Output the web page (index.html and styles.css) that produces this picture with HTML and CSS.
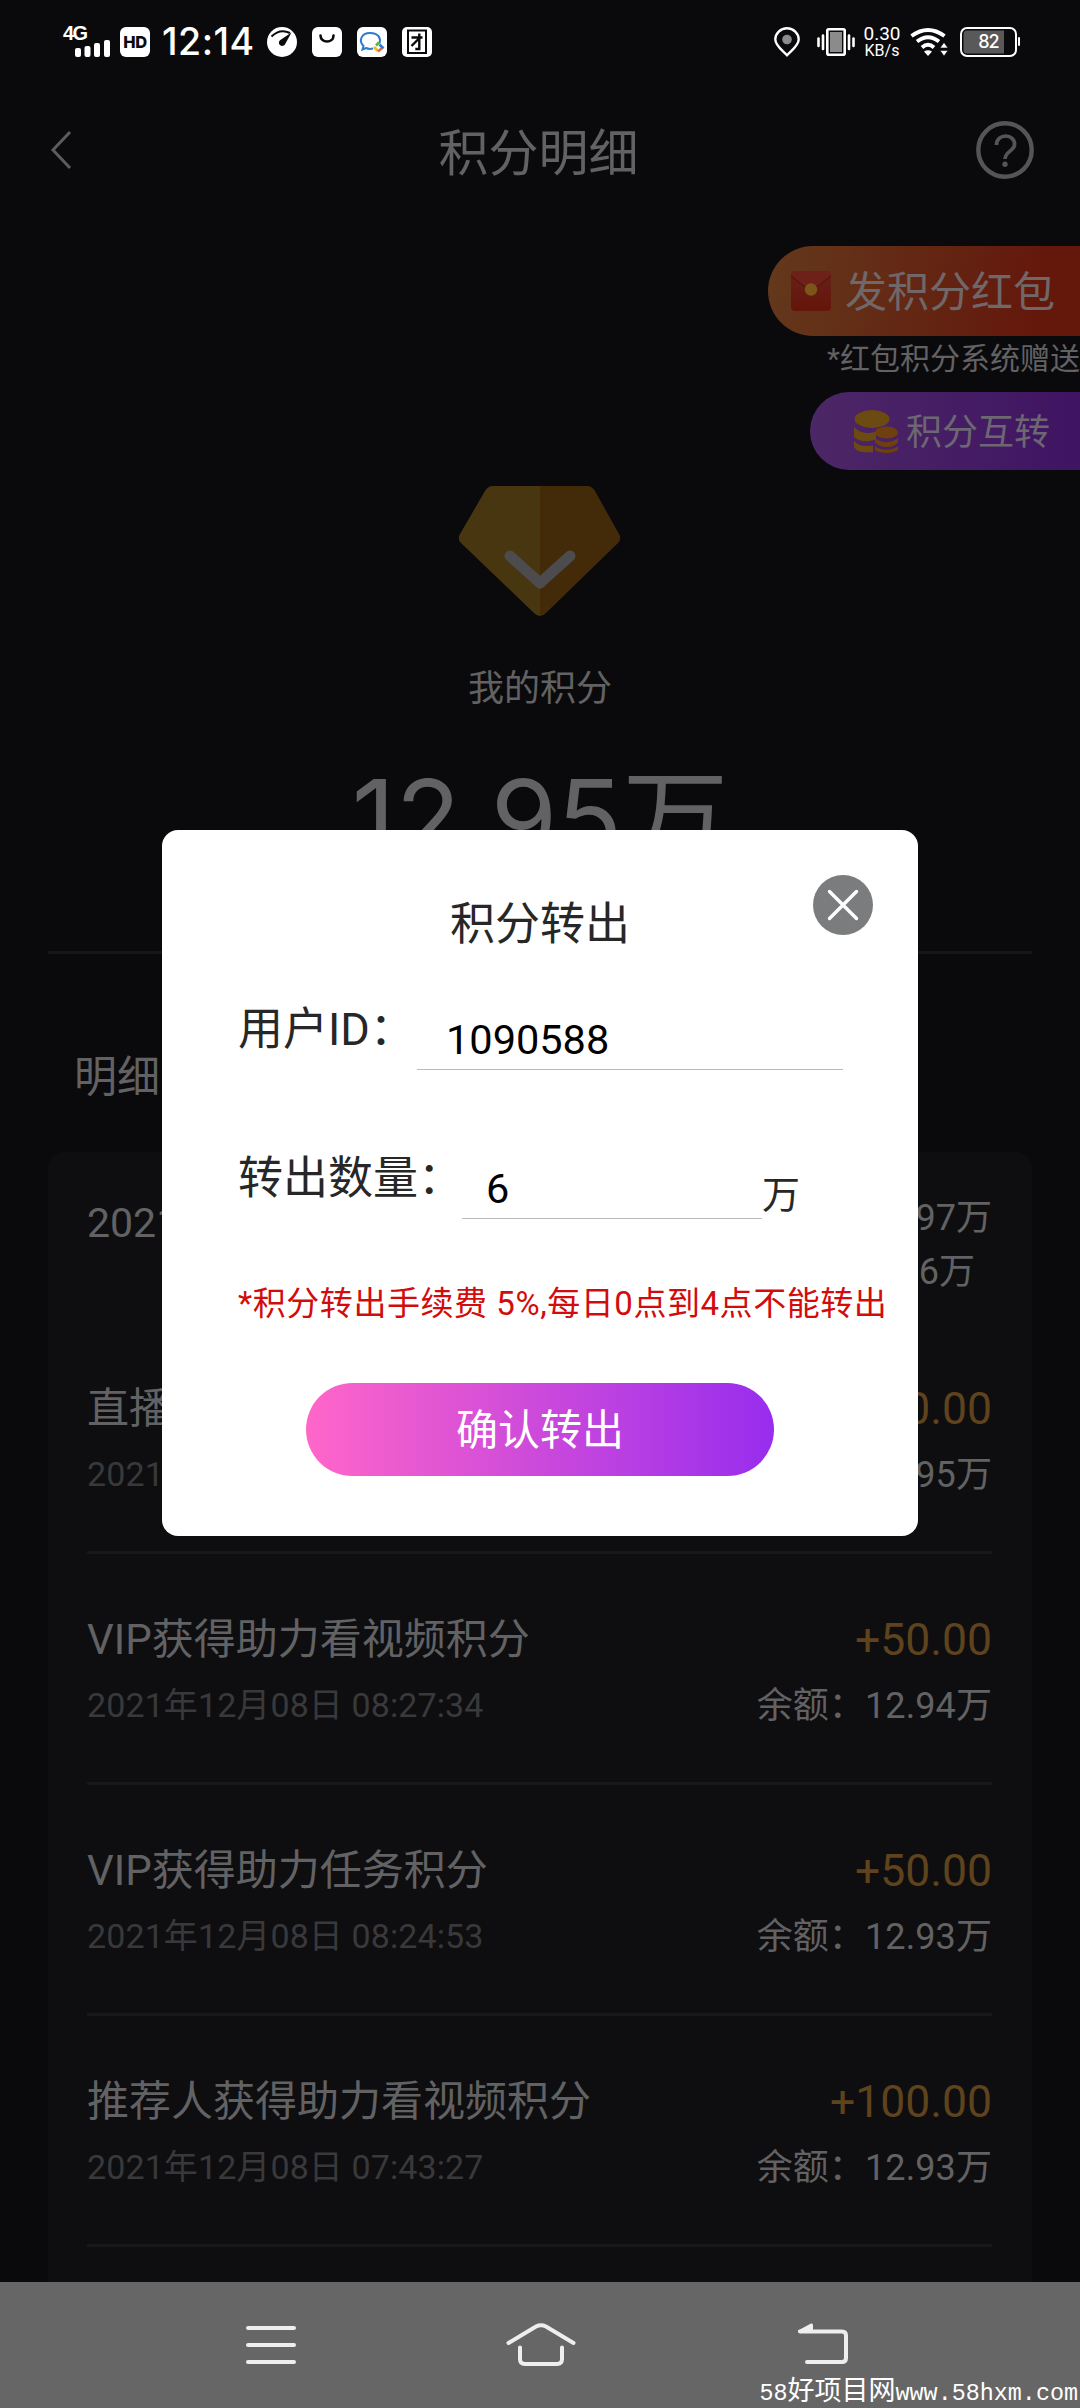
FILE: index.html
```html
<!DOCTYPE html>
<html lang="zh-CN">
<head>
<meta charset="utf-8">
<title>积分明细</title>
<link rel="stylesheet" href="styles.css">
</head>
<body>
<div class="phone">
  <header class="status">
    <div class="signal">
      <span class="net">4G</span>
      <svg class="bars" width="36" height="17" viewBox="0 0 36 17"><rect x="0" y="8" width="6" height="9" rx="2"/><rect x="9.500" y="6" width="6" height="11" rx="2"/><rect x="19" y="3" width="6" height="14" rx="2"/><rect x="29" y="0" width="6" height="17" rx="2"/></svg>
    </div>
    <span class="hd">HD</span>
    <span class="clock">12:14</span>
    <div class="apps">
      <svg width="30" height="30" viewBox="0 0 30 30"><circle cx="15" cy="15" r="15" fill="#fff"/><path d="M4.500 9.500Q13 1 23 6" fill="none" stroke="#0a0a0c" stroke-width="2"/><path d="M24.500 5.500L18.200 17a3.300 3.300 0 1 1-5.200-3.800z" fill="#0a0a0c"/></svg>
      <svg width="30" height="30" viewBox="0 0 30 30"><rect width="30" height="30" rx="6" fill="#fff"/><path d="M8.500 8.500c0 8 13 8 13 0" fill="none" stroke="#0a0a0c" stroke-width="2.600" stroke-linecap="round"/></svg>
      <svg width="30" height="30" viewBox="0 0 30 30"><rect width="30" height="30" rx="6" fill="#fff"/><path d="M16 21.500q-4 1-7-.500l-3.500 1.500 1-3.500C1.500 14 4 6 13 6s11 5.500 9.500 10.500" fill="none" stroke="#2a7ccc" stroke-width="2"/><path d="M19 18.500l3-3" stroke="#57b447" stroke-width="2.600"/><path d="M22.500 17.500l4 4" stroke="#2a7ccc" stroke-width="2.600"/><path d="M17 20l4 4" stroke="#edb62e" stroke-width="2.600"/><path d="M21 24.500l4-3.500" stroke="#e06a3c" stroke-width="2.600"/></svg>
      <svg width="30" height="30" viewBox="0 0 30 30"><rect width="30" height="30" rx="5" fill="#fff"/><rect x="6" y="3.500" width="18" height="22.500" fill="none" stroke="#0a0a0c" stroke-width="2"/><path d="M9.500 10.500h11M17.300 6.500v15.500h-4M17 11.500L9.500 19" fill="none" stroke="#0a0a0c" stroke-width="2.400"/></svg>
    </div>
    <div class="status-right">
      <svg class="pin" width="26" height="30" viewBox="0 0 26 30"><path d="M13 28.300C8 23 1.300 18.500 1.300 12.500a11.700 11.200 0 0 1 23.400 0c0 6-6.700 10.500-11.700 15.800z" fill="none" stroke="#fff" stroke-width="2.400"/><circle cx="13" cy="12.500" r="4.800" fill="#8b8b8c"/></svg>
      <svg class="vibrate" width="38" height="28" viewBox="0 0 38 28"><rect x="10.300" y="1.300" width="17.400" height="25.400" rx="1.500" fill="none" stroke="#fff" stroke-width="2.600"/><rect x="13" y="4" width="12" height="20" fill="#8b8b8c"/><path d="M1.500 10.500v7.500M6 7.500v13.500M32 7.500v13.500M36.500 10.500v7.500" stroke="#fff" stroke-width="2.600" stroke-linecap="round"/></svg>
      <div class="speed"><span>0.30</span><span class="unit">KB/s</span></div>
      <svg class="wifi" width="38" height="28" viewBox="0 0 38 28"><path d="M1.500 8Q18 -4 34.500 8M7 13.500Q18 5 29 13.500M12 19.500Q18 14 24 19.500" fill="none" stroke="#fff" stroke-width="3.800"/><path d="M14 23.500q4-2.500 8 0l-4 4.500z" fill="#fff"/><path d="M34 14.500l4 5.500h-8zM34 28l4-5.500h-8z" fill="#fff" stroke="#0a0a0c" stroke-width=".6"/></svg>
      <div class="battery"><span>82</span></div>
    </div>
  </header>

  <nav class="title-bar">
    <svg class="back" width="22" height="40" viewBox="0 0 22 40"><path d="M20 2L3 20l17 18" fill="none" stroke="#5c5c5e" stroke-width="3"/></svg>
    <h1>积分明细</h1>
    <svg class="help" width="58" height="58" viewBox="0 0 58 58"><circle cx="29" cy="29" r="26.700" fill="none" stroke="#555557" stroke-width="4.400"/><path d="M20.500 24c0-12.500 19-11.500 18 0-.500 6-9 6-9.500 14" fill="none" stroke="#555557" stroke-width="3.700"/><circle cx="29" cy="43.300" r="2.700" fill="#555557"/></svg>
  </nav>

  <section class="actions">
    <button class="pill pill-red">
      <svg width="42" height="42" viewBox="0 0 42 42"><defs><linearGradient id="env" x1="0" y1="0" x2="0" y2="1"><stop offset="0" stop-color="#65211a"/><stop offset="1" stop-color="#651509"/></linearGradient></defs><rect x="1" y="1" width="40" height="40" rx="4" fill="url(#env)"/><path d="M1 5Q1 1 5 1h32q4 0 4 4L28 15.500q-7 5-14 0z" fill="#6e2118"/><path d="M1 6l13 10q7 5 14 0L41 6" fill="none" stroke="#511208"/><circle cx="21" cy="19.500" r="6.200" fill="#7c5618"/></svg>
      <span>发积分红包</span>
    </button>
    <p class="gift-note">*红包积分系统赠送</p>
    <button class="pill pill-purple">
      <svg width="44" height="43" viewBox="0 0 44 43"><g fill="#6b4b12"><ellipse cx="18" cy="9" rx="17.500" ry="9"/><path d="M0 17c7 7 15 7 22 4.500v8C12 33 4 31 0 27zM0 31c6 6 11 5.500 19 4.500v6.500C9 43 3 42 0 37z"/><g fill="#6f400d"><ellipse cx="32.500" cy="22.500" rx="11.500" ry="6"/><path d="M21 28c6 5.500 17 5.500 23 0v4.500c-5 6-17 6-23 0zM21 36c6 5 17 5 23 0v4c-5 4-18 4-23 0z"/></g></g></svg>
      <span>积分互转</span>
    </button>
  </section>

  <section class="summary">
    <svg width="162" height="131" viewBox="0 0 162 131"><defs><clipPath id="gem"><path d="M34 0h94q5 0 8 5l24 43q3 5-1 9L87 127q-6 6-12 0L2 57q-4-4-1-9L26 5q3-5 8-5z"/></clipPath></defs><g clip-path="url(#gem)"><path d="M0 0h81v131H0z" fill="#473610"/><path d="M81 0h81v131H81z" fill="#432a09"/></g><path d="M51 70l30 27 30-27" fill="none" stroke="#4c4b4d" stroke-width="11" stroke-linecap="round" stroke-linejoin="round"/></svg>
    <h2>我的积分</h2>
    <p class="total"><span>12.95</span>万</p>
  </section>

  <h3 class="section-title">明细</h3>

  <main class="card">
    <div class="month">
      <span>2021</span>
      <div class="month-sums"><span>97万</span><span class="spent">6万</span></div>
    </div>
    <div class="row">
      <div class="row-left"><b>直播</b><time>2021</time></div>
      <div class="row-right"><b>0.00</b><span>95万</span></div>
    </div>
    <div class="row">
      <div class="row-left"><b>VIP获得助力看视频积分</b><time>2021年12月08日 08:27:34</time></div>
      <div class="row-right"><b>+50.00</b><span>余额：12.94万</span></div>
    </div>
    <div class="row">
      <div class="row-left"><b>VIP获得助力任务积分</b><time>2021年12月08日 08:24:53</time></div>
      <div class="row-right"><b>+50.00</b><span>余额：12.93万</span></div>
    </div>
    <div class="row">
      <div class="row-left"><b>推荐人获得助力看视频积分</b><time>2021年12月08日 07:43:27</time></div>
      <div class="row-right"><b>+100.00</b><span>余额：12.93万</span></div>
    </div>
  </main>

  <footer class="system-nav">
    <svg width="50" height="44" viewBox="0 0 50 44"><path d="M2 5h46M2 22h46M2 39h46" stroke="#eee" stroke-width="4" stroke-linecap="round"/></svg>
    <svg width="70" height="44" viewBox="0 0 70 44"><path d="M2.500 20L30 3.500q5-2.500 10 0L67.500 20M14 24.500V36q0 5 5 5h32q5 0 5-5V24.500" fill="none" stroke="#eee" stroke-width="4" stroke-linecap="round"/></svg>
    <svg width="52" height="44" viewBox="0 0 52 44"><path d="M3 8.500h42q4 0 4 4V35q0 4-4 4H10" fill="none" stroke="#eee" stroke-width="4" stroke-linecap="round"/><path d="M1 7.500L14 .5q2-.5 2 1.500v7H2z" fill="#eee"/></svg>
  </footer>
  <div class="watermark">58<span>好项目网</span>www.58hxm.com</div>

  <div class="dialog">
    <svg class="close" width="60" height="60" viewBox="0 0 60 60"><circle cx="30" cy="30" r="30" fill="#7b7c7d"/><path d="M16.500 16.500l27 27M43.500 16.500l-27 27" stroke="#fff" stroke-width="3.400" stroke-linecap="round"/></svg>
    <h2>积分转出</h2>
    <div class="field field-id"><label>用户ID：</label><div class="input">1090588</div></div>
    <div class="field field-amount"><label>转出数量：</label><div class="input">6</div><span class="unit">万</span></div>
    <p class="fee">*积分转出手续费 5%,每日0点到4点不能转出</p>
    <button class="confirm">确认转出</button>
  </div>
</div>
</body>
</html>
```
FILE: styles.css
```css
* { box-sizing: border-box; margin: 0; padding: 0; }
body { background: #0a0a0c; font-family: Roboto, "Noto Sans CJK SC", sans-serif; color: #626264; }
h1, h2, h3, b { font-weight: 400; }
button { border: 0; font-family: inherit; }
svg { display: block; flex: none; overflow: visible; }
.phone { position: relative; width: 1080px; height: 2408px; display: flex; flex-direction: column; overflow: hidden; white-space: nowrap; }

/* status bar */
.status { height: 84px; flex: none; display: flex; align-items: center; padding-left: 63px; padding-right: 63px; color: #fff; font-family: Inter, sans-serif; }
.signal { width: 57px; height: 34px; display: flex; flex-direction: column; }
.net { font: 700 20px/17px "Liberation Sans", sans-serif; letter-spacing: -1.500px; height: 15px; }
.bars { margin-left: 12px; fill: #fff; }
.hd { width: 30px; height: 30px; border-radius: 6px; background: #fff; color: #0a0a0c; font: 800 16.500px/30px Inter, sans-serif; letter-spacing: -.5px; text-align: center; }
.clock { width: 117px; padding-left: 12px; font-size: 37.500px; line-height: 40px; font-weight: 500; letter-spacing: .5px; }
.apps { display: flex; gap: 15px; }
.status-right { margin-left: auto; display: flex; align-items: center; }
.pin { margin-right: 2px; }
.vibrate { margin-left: 15px; }
.speed { width: 40px; margin-left: 7px; display: flex; flex-direction: column; align-items: center; font: 400 19px/17px Roboto, sans-serif; }
.speed .unit { font-size: 16px; }
.wifi { margin-left: 8px; }
.battery { position: relative; margin-left: 12px; width: 57px; height: 30px; border: 2.500px solid #fff; border-radius: 7px; background: linear-gradient(90deg, #59595a 79%, #0a0a0c 79%); box-shadow: inset 0 0 0 1.500px #0a0a0c; font-size: 18px; font-weight: 500; line-height: 26px; text-align: center; letter-spacing: -1px; }
.battery::after { content: ""; position: absolute; right: -5px; top: 8px; width: 2px; height: 9px; border-radius: 1px; background: #fff; }

/* page title */
.title-bar { height: 132px; flex: none; display: flex; align-items: center; justify-content: space-between; padding: 0 46px 0 50px; }
.title-bar h1 { font-size: 50px; line-height: 72px; margin: 7px 0 0 29px; }

/* floating actions */
.actions { margin-top: 30px; display: flex; flex-direction: column; align-items: flex-end; }
.pill { display: flex; align-items: center; color: #626264; }
.pill span { margin-top: -5px; }
.pill-red { width: 312px; height: 90px; border-radius: 45px 0 0 45px; padding-left: 22px; gap: 13px; background: linear-gradient(100deg, #63391c, #64180c 85%); font-size: 42px; color: #706769; }
.gift-note { height: 56px; line-height: 45px; font-size: 30px; }
.pill-purple { width: 270px; height: 78px; border-radius: 39px 0 0 39px; padding-left: 44px; gap: 8px; background: linear-gradient(90deg, #4c2766, #3f1463); font-size: 36px; color: #6d6772; }

/* balance */
.summary { height: 484px; margin: 0 48px; padding-top: 16px; display: flex; flex-direction: column; align-items: center; border-bottom: 3px solid #161618; }
.summary h2 { margin-top: 46px; font-size: 36px; line-height: 52px; }
.total { margin-top: 33px; font-size: 106px; line-height: 140px; }
.total span { font-family: Inter, sans-serif; font-size: 107px; }

/* records */
.section-title { margin: 93px 0 0 74px; height: 105px; font-size: 43px; line-height: 60px; }
.card { margin: 0 48px; padding: 0 40px 0 39px; height: 1130px; flex: none; background: #0e0e10; border-radius: 16px 16px 0 0; overflow: hidden; }
.month { height: 171px; display: flex; justify-content: space-between; font-size: 41px; line-height: 56px; padding-top: 43px; }
.month-sums { display: flex; flex-direction: column; align-items: flex-end; font-size: 36px; line-height: 54px; margin-top: -4px; }
.spent { margin-right: 17px; }
.row { height: 231px; padding: 56px 0 0; border-bottom: 3px solid #18181a; display: flex; justify-content: space-between; }
.row-left, .row-right { display: flex; flex-direction: column; gap: 12px; }
.row-right { align-items: flex-end; gap: 13px; }
.row b { font-size: 42px; line-height: 60px; }
.row time { font-size: 34px; line-height: 46px; color: #39393b; letter-spacing: .1px; }
.row-right b { font-size: 44.500px; color: #5e431d; }
.row-right span { font-size: 36px; line-height: 46px; letter-spacing: .1px; }

/* system navigation */
.system-nav { height: 126px; background: #666; display: flex; padding: 41px 0 0 246px; }
.system-nav svg:nth-child(2) { margin-left: 210px; }
.system-nav svg:nth-child(3) { margin-left: 221px; }
.watermark { position: absolute; right: 2px; bottom: -3px; line-height: 34px; color: #fff; font-family: "Liberation Mono", monospace; font-size: 23.400px; }
.watermark span { font-family: "Noto Sans CJK SC", sans-serif; font-size: 27px; line-height: 20px; }

/* dialog */
.dialog { position: absolute; left: 162px; top: 830px; width: 756px; height: 706px; padding: 63px 0 0 76px; border-radius: 16px; background: #fff; color: #272727; }
.close { position: absolute; right: 45px; top: 45px; }
.dialog h2 { margin-left: -76px; text-align: center; font-size: 45px; line-height: 64px; }
.field { display: flex; font-size: 45px; line-height: 64px; }
.field-id { margin-top: 41px; height: 149px; }
.field label { width: 179px; flex: none; }
.input { width: 426px; height: 72px; padding: 17px 0 0 29px; border-bottom: 1.500px solid #bbb; color: #000; font-size: 41.500px; line-height: 50px; }
.field-amount label { width: 224px; }
.field-amount .input { width: 300px; padding-left: 24px; }
.field .unit { font-size: 38px; line-height: 56px; margin-top: 20px; }
.fee { margin-top: 57px; font-size: 33px; line-height: 48px; letter-spacing: .55px; color: #d20c0c; }
.confirm { display: block; width: 468px; height: 93px; margin: 55px 0 0 68px; padding-top: 2px; border-radius: 47px; background: linear-gradient(90deg, #ff66c8, #982dee); color: #fff; font-size: 42px; line-height: 90px; }
```
